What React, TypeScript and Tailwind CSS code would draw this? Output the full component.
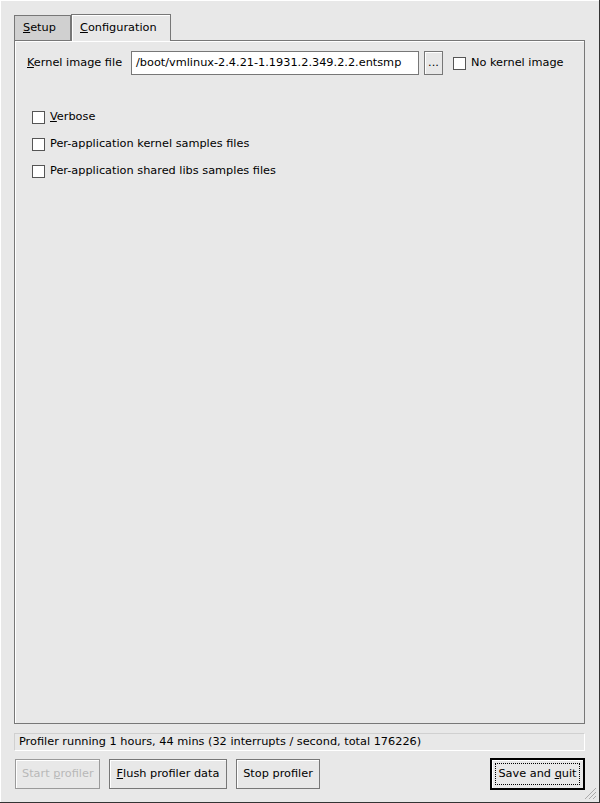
import React from "react";

function Check({ label }: { label: React.ReactNode }) {
  return (
    <label className="flex items-center gap-[5px] h-[27px] whitespace-nowrap">
      <span className="w-[13px] h-[13px] border border-[#555] bg-white shrink-0" />
      <span>{label}</span>
    </label>
  );
}

function Btn({
  children,
  className = "",
  disabled,
}: {
  children: React.ReactNode;
  className?: string;
  disabled?: boolean;
}) {
  return (
    <button
      className={
        "h-[30px] px-[6px] whitespace-nowrap border bg-[#e8e8e8] shadow-[inset_1px_1px_0_#fff] " +
        (disabled ? "text-[#b8b8b8] border-[#9a9a9a] " : "text-black border-[#777] ") +
        className
      }
    >
      {children}
    </button>
  );
}

export default function App() {
  return (
    <div
      className="w-[600px] h-[803px] bg-[#e8e8e8] border-r border-b border-[#333] shadow-[inset_1px_1px_0_#fff] text-[11.3px] text-black flex flex-col relative whitespace-nowrap"
      style={{ fontFamily: '"DejaVu Sans", sans-serif' }}
    >
      {/* tabs */}
      <div className="flex items-end h-[40px] pl-[14px]">
        <div className="h-[25px] w-[57px] bg-[#d0d0d0] border border-b-0 border-[#777] flex items-center pl-[8px] pt-[1px]">
          <span>
            <u>S</u>etup
          </span>
        </div>
        <div className="h-[27px] w-[100px] bg-[#e8e8e8] border border-b-0 border-[#777] shadow-[inset_1px_1px_0_#fff] flex items-center pl-[8px] -mb-px relative z-10">
          <span>
            <u>C</u>onfiguration
          </span>
        </div>
      </div>

      <div className="mx-[14px] h-[684px] border border-[#777] shadow-[inset_1px_1px_0_#fff] pt-[10px]">
        <div className="flex items-center pl-[12px] h-[24px]">
          <span className="w-[104px]">
            <u>K</u>ernel image file
          </span>
          <div className="w-[288px] h-[24px] bg-white border border-[#777] flex items-center pl-[4px] overflow-hidden">
            /boot/vmlinux-2.4.21-1.1931.2.349.2.2.entsmp
          </div>
          <button className="ml-[5px] w-[19px] h-[24px] border border-[#777] shadow-[inset_1px_1px_0_#fff] flex items-center justify-center leading-none">
            ...
          </button>
          <div className="ml-[10px]">
            <Check label="No kernel image" />
          </div>
        </div>

        <div className="mt-[29px] pl-[17px] flex flex-col">
          <Check
            label={
              <>
                <u>V</u>erbose
              </>
            }
          />
          <Check label="Per-application kernel samples files" />
          <Check label="Per-application shared libs samples files" />
        </div>
      </div>

      <div className="mx-[14px] mt-[9px] h-[18px] border border-[#d0d0d0] border-r-white border-b-white flex items-center pl-[4px]">
        Profiler running 1 hours, 44 mins (32 interrupts / second, total 176226)
      </div>

      <div className="flex items-center ml-[15px] mr-[14px] mt-[7px] gap-[9px]">
        <Btn disabled className="w-[85px]">
          Start <u>p</u>rofiler
        </Btn>
        <Btn className="w-[118px]">
          <u>F</u>lush profiler data
        </Btn>
        <Btn className="w-[84px]">Stop profiler</Btn>
        <div className="ml-auto border-2 border-black">
          <button className="h-[28px] w-[91px] bg-[#e8e8e8] shadow-[inset_1px_1px_0_#fff] flex items-center justify-center">
            <span className="border border-dotted border-black px-[2px] leading-[20px]">
              Save and <u>q</u>uit
            </span>
          </button>
        </div>
      </div>

      <svg className="absolute right-[2px] bottom-[2px]" width="14" height="14" viewBox="0 0 14 14">
        <path d="M13 2L2 13M13 6L6 13M13 10L10 13" stroke="#aaa" strokeWidth="1" />
      </svg>
    </div>
  );
}
